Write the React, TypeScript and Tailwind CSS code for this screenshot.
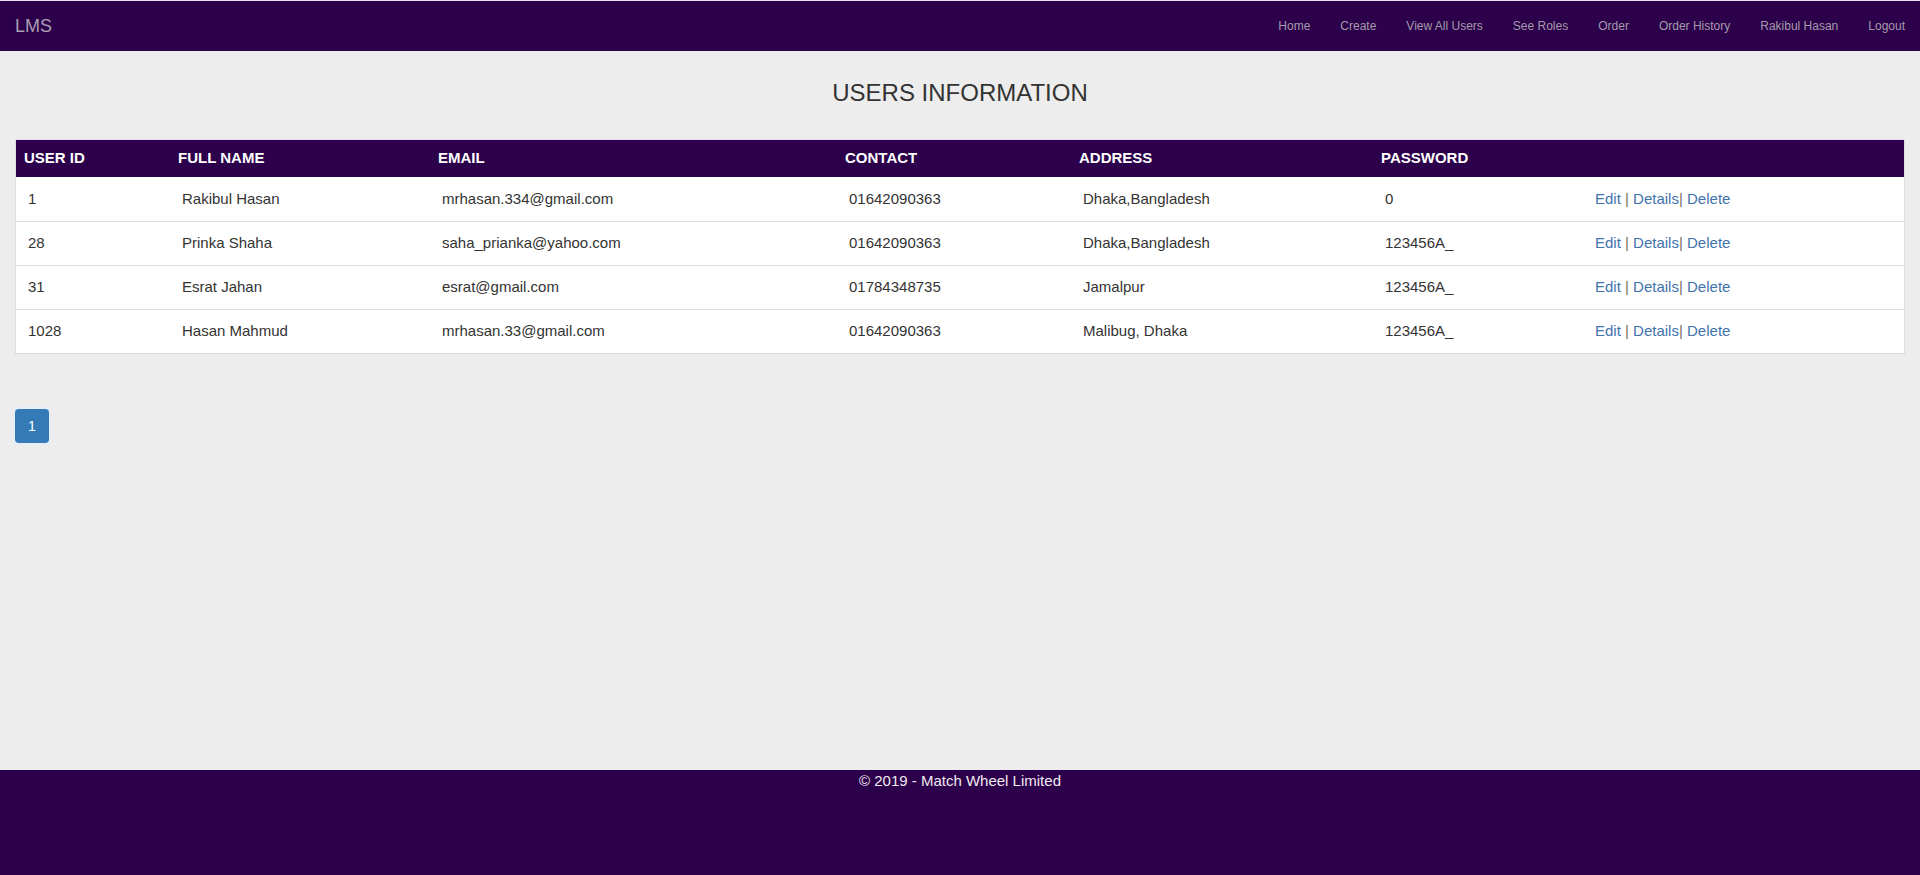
import React from "react";

const users = [
  { id: "1", name: "Rakibul Hasan", email: "mrhasan.334@gmail.com", contact: "01642090363", address: "Dhaka,Bangladesh", password: "0" },
  { id: "28", name: "Prinka Shaha", email: "saha_prianka@yahoo.com", contact: "01642090363", address: "Dhaka,Bangladesh", password: "123456A_" },
  { id: "31", name: "Esrat Jahan", email: "esrat@gmail.com", contact: "01784348735", address: "Jamalpur", password: "123456A_" },
  { id: "1028", name: "Hasan Mahmud", email: "mrhasan.33@gmail.com", contact: "01642090363", address: "Malibug, Dhaka", password: "123456A_" },
];

const navLinks = ["Home", "Create", "View All Users", "See Roles", "Order", "Order History", "Rakibul Hasan", "Logout"];

export default function App() {
  return (
    <div
      className="flex h-[875px] flex-col bg-[#ededed] text-[#333]"
      style={{ fontFamily: '"Liberation Sans", Arial, Helvetica, sans-serif' }}
    >
      <nav className="flex h-[51px] shrink-0 items-center justify-between border-t border-[#e8e0ee] bg-[#2c004b] pl-[15px]">
        <span className="text-[18px] leading-[20px] text-[#a99fb2]">LMS</span>
        <ul className="flex h-full items-center">
          {navLinks.map((l) => (
            <li key={l}>
              <a className="block px-[15px] text-[12px] leading-[20px] text-[#a49cab]" href="#">
                {l}
              </a>
            </li>
          ))}
        </ul>
      </nav>

      <main className="flex-1 px-[15px]">
        <h3 className="mt-[29px] text-center text-[24px] leading-[26px] text-[#333]">USERS INFORMATION</h3>

        <div className="mt-[33px] border border-[#dcdcdc] border-t-[#e6daf0] bg-white">
          <table className="w-full table-fixed border-collapse text-[15px]">
            <colgroup>
              <col className="w-[154px]" />
              <col className="w-[260px]" />
              <col className="w-[407px]" />
              <col className="w-[234px]" />
              <col className="w-[302px]" />
              <col className="w-[210px]" />
              <col />
            </colgroup>
            <thead>
              <tr className="h-[37px] bg-[#2c004b] text-left text-white">
                <th className="pl-[8px] font-bold">USER ID</th>
                <th className="pl-[8px] font-bold">FULL NAME</th>
                <th className="pl-[8px] font-bold">EMAIL</th>
                <th className="pl-[8px] font-bold">CONTACT</th>
                <th className="pl-[8px] font-bold">ADDRESS</th>
                <th className="pl-[8px] font-bold">PASSWORD</th>
                <th></th>
              </tr>
            </thead>
            <tbody>
              {users.map((u, i) => (
                <tr key={u.id} className={`h-[44px] ${i > 0 ? "border-t border-[#dddddd]" : ""}`}>
                  <td className="pl-[12px]">{u.id}</td>
                  <td className="pl-[12px]">{u.name}</td>
                  <td className="pl-[12px]">{u.email}</td>
                  <td className="pl-[12px]">{u.contact}</td>
                  <td className="pl-[12px]">{u.address}</td>
                  <td className="pl-[12px]">{u.password}</td>
                  <td className="pl-[12px]">
                    <a className="text-[#3f73ad]" href="#">Edit</a>
                    <span className="text-[#7a6e62]"> | </span>
                    <a className="text-[#3f73ad]" href="#">Details</a>
                    <span className="text-[#7a6e62]">| </span>
                    <a className="text-[#3f73ad]" href="#">Delete</a>
                  </td>
                </tr>
              ))}
            </tbody>
          </table>
        </div>

        <div className="mt-[55px] flex">
          <span className="flex h-[34px] w-[34px] items-center justify-center rounded-[4px] bg-[#337ab7] text-[14px] text-white shadow-[0_0_0_2px_#e3eef8]">
            1
          </span>
        </div>
      </main>

      <footer className="h-[105px] shrink-0 bg-[#2c004b] text-center text-[15px] leading-[22px] text-[#f0eaf0]">
        © 2019 - Match Wheel Limited
      </footer>
    </div>
  );
}
